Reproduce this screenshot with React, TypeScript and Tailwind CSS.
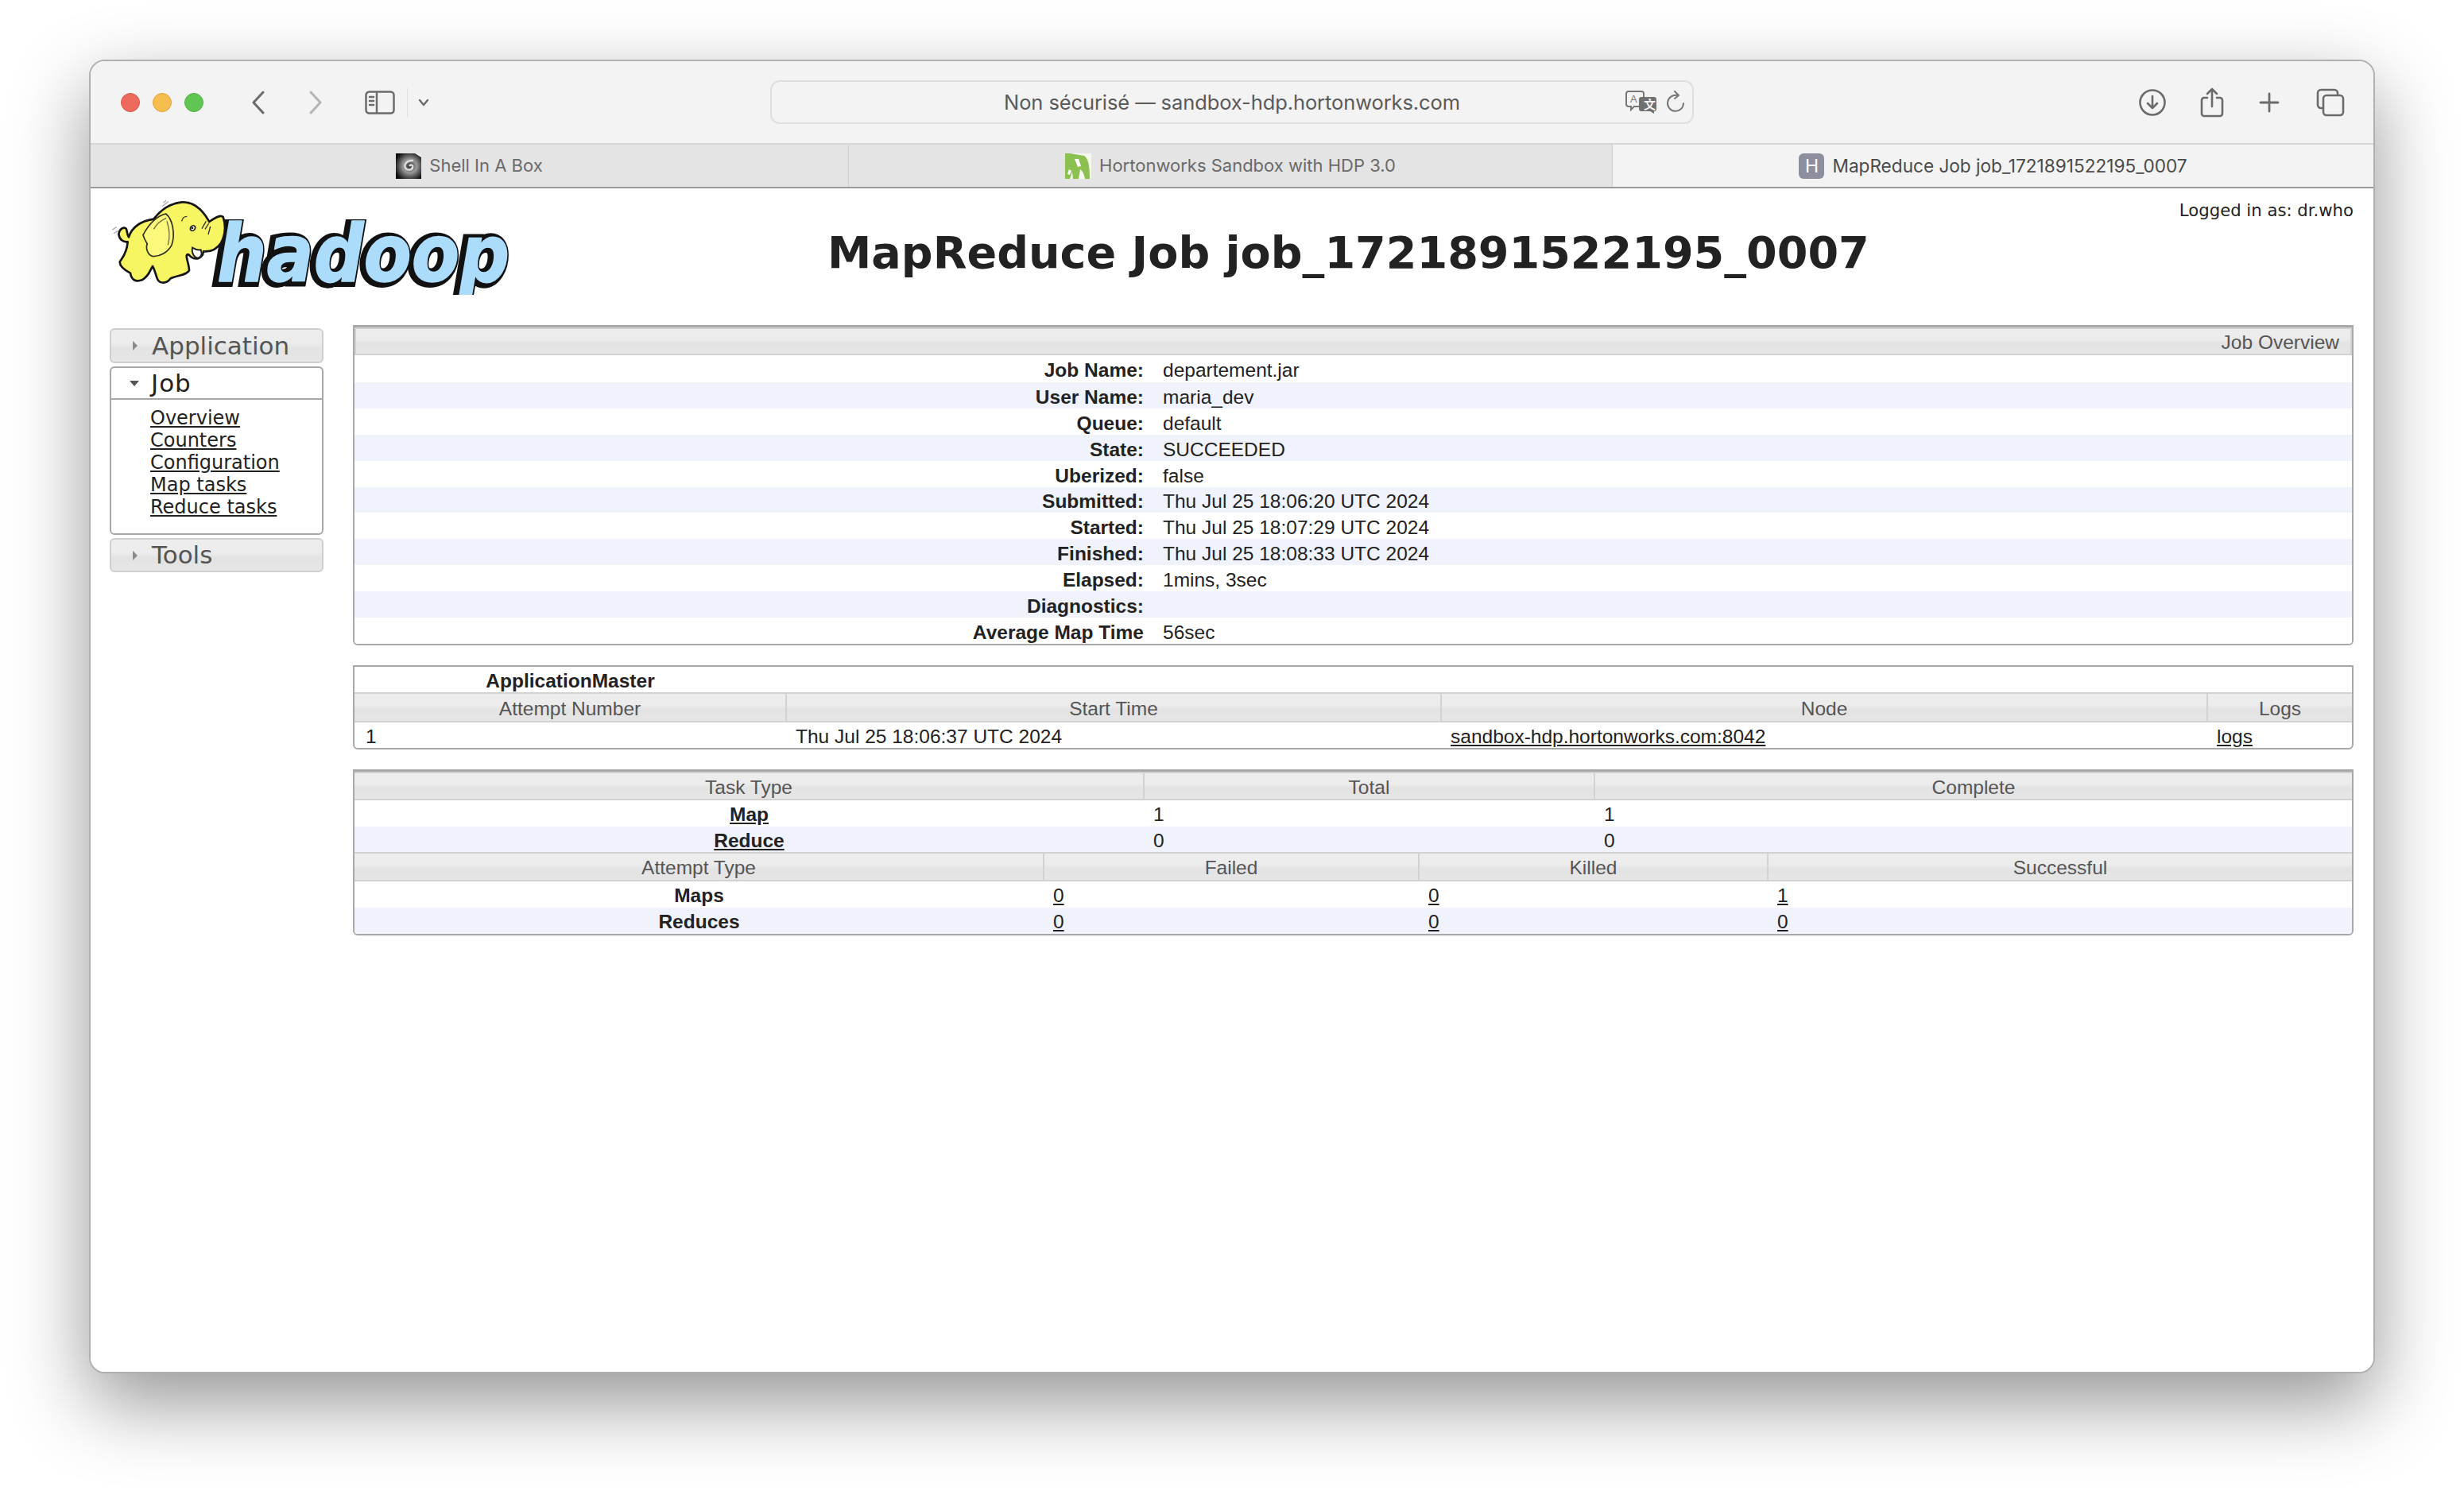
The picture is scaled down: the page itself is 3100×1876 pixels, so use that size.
const dejavu = "font-['DejaVu_Sans',sans-serif]";
const helv = "font-['Liberation_Sans',Arial,sans-serif]";
const headBg = "bg-[linear-gradient(#ededed_0%,#ececec_42%,#e3e3e3_58%,#e6e6e6_100%)]";

function HadoopLogo() {
  return (
    <svg width="530" height="135" viewBox="0 0 530 135" className="flex-none overflow-visible">
      <defs>
        <clipPath id="hadoopClip"><rect x="130" y="31" width="400" height="95" /></clipPath>
      </defs>
      <g clipPath="url(#hadoopClip)">
        <text x="143" y="108.5" fontFamily="'DejaVu Sans',sans-serif" fontWeight="bold" fontStyle="italic" fontSize="100" textLength="368" lengthAdjust="spacingAndGlyphs" fill="#111" stroke="#111" strokeWidth="12" strokeLinejoin="miter" transform="translate(-3 1)">hadoop</text>
        <text x="143" y="108.5" fontFamily="'DejaVu Sans',sans-serif" fontWeight="bold" fontStyle="italic" fontSize="100" textLength="368" lengthAdjust="spacingAndGlyphs" fill="#abdcfb" stroke="#abdcfb" strokeWidth="1.5" strokeLinejoin="round">hadoop</text>
      </g>
      <g transform="scale(0.33333)">
        <path d="M58 148C62 128 78 120 86 128C90 134 88 148 96 160C108 122 140 100 190 92C214 60 252 32 298 28C340 26 372 52 400 102C420 88 442 74 452 84C462 112 462 150 444 182C428 206 404 216 378 214C376 238 350 250 330 234C322 224 316 222 314 232C316 250 324 268 324 286C316 304 280 304 254 316C238 338 212 336 204 318C196 300 196 286 186 270C176 284 174 306 146 322C122 330 106 322 102 296C80 284 62 270 62 254C70 238 88 226 92 178C76 180 60 170 58 148Z" fill="#f8f562" stroke="#151515" strokeWidth="8" strokeLinejoin="round" />
        <path d="M150 152C168 118 196 82 236 72C262 92 272 150 258 190C244 216 214 236 184 232C164 224 160 196 166 186C160 176 154 166 150 152Z" fill="#fbf87c" stroke="#2b2b1a" strokeWidth="5" />
        <path d="M190 130C200 112 214 98 238 88M240 100C250 130 252 160 244 190" fill="none" stroke="#6e6d3a" strokeWidth="4" />
        <path d="M330 122C342 110 352 120 344 132C336 140 324 136 330 122Z" fill="#fff" stroke="#222" strokeWidth="5" />
        <circle cx="336" cy="126" r="4" fill="#222" />
        <path d="M296 100C298 88 306 82 316 82M372 128L388 100M384 130L398 108M396 150L404 120" fill="none" stroke="#333" strokeWidth="4" />
        <path d="M336 200C332 222 344 240 360 238C372 232 372 218 368 208C358 210 346 206 336 200Z" fill="#fff" stroke="#222" strokeWidth="6" />
        <path d="M34 132L50 122M40 146L56 136M222 44L246 26M226 30L238 22" fill="none" stroke="#aaa" strokeWidth="4" />
      </g>
    </svg>
  );
}

function Toolbar() {
  return (
    <div className="h-[103px] flex-none bg-[#f3f3f3] flex items-center">
      <div className="ml-[38px] flex gap-4">
        <div className="w-6 h-6 rounded-full bg-[#ee6a5f] border border-[#d9564b]" />
        <div className="w-6 h-6 rounded-full bg-[#f6bd4f] border border-[#dfa23a]" />
        <div className="w-6 h-6 rounded-full bg-[#61c554] border border-[#4fb043]" />
      </div>
      <svg width="18" height="30" viewBox="0 0 18 30" className="ml-[60px]" fill="none" stroke="#6b6b6b" strokeWidth="3" strokeLinecap="round" strokeLinejoin="round"><path d="M15 2 3 15l12 13" /></svg>
      <svg width="18" height="30" viewBox="0 0 18 30" className="ml-[54px]" fill="none" stroke="#b4b4b4" strokeWidth="3" strokeLinecap="round" strokeLinejoin="round"><path d="M3 2l12 13L3 28" /></svg>
      <svg width="38" height="30" viewBox="0 0 38 30" className="ml-[53px]" fill="none" stroke="#6b6b6b" strokeWidth="2.5"><rect x="1.5" y="1.5" width="35" height="27" rx="4" /><path d="M15 2v26" /><path d="M6 8h5M6 13h5M6 18h5" strokeLinecap="round" /></svg>
      <div className="ml-[15px] w-px h-9 bg-[#e0e0e0]" />
      <svg width="14" height="10" viewBox="0 0 14 10" className="ml-[13px]" fill="none" stroke="#6b6b6b" strokeWidth="2.4" strokeLinecap="round" strokeLinejoin="round"><path d="M2 2l5 6 5-6" /></svg>
      <div className="ml-[429px] w-[1162px] h-[55px] rounded-[12px] border-2 border-[#dedede] flex items-center relative">
        <span className="w-full text-center font-['Inter',sans-serif] text-[#5a5a5a] text-[25.5px] tracking-[-0.1px] pt-[1px]">Non sécurisé — sandbox-hdp.hortonworks.com</span>
        <svg width="40" height="30" viewBox="0 0 40 30" className="absolute left-[1074px] top-[11px]" fill="none">
          <path d="M4 1h16a3 3 0 0 1 3 3v13a3 3 0 0 1-3 3H11l-4 4v-4H4a3 3 0 0 1-3-3V4a3 3 0 0 1 3-3Z" stroke="#777" strokeWidth="2" fill="#f3f3f3" />
          <text x="6" y="15" fontSize="13" fill="#777" fontFamily="'Liberation Sans',sans-serif">A</text>
          <path d="M20 8h16a3 3 0 0 1 3 3v12a3 3 0 0 1-3 3v3l-5-3H20a3 3 0 0 1-3-3V11a3 3 0 0 1 3-3Z" fill="#707070" />
          <text x="23" y="23" fontSize="15" fontWeight="bold" fill="#f3f3f3" fontFamily="'Noto Sans CJK SC',sans-serif">文</text>
        </svg>
        <svg width="24" height="30" viewBox="0 0 24 30" className="absolute left-[1125px] top-[11px]" fill="none" stroke="#777" strokeWidth="2" strokeLinecap="round" strokeLinejoin="round"><path d="M14 6A10 10 0 1 0 22 16" /><path d="M11 1l5 5-5 4" /></svg>
      </div>
      <svg width="34" height="34" viewBox="0 0 34 34" className="ml-[560px]" fill="none" stroke="#6b6b6b" strokeWidth="2.6" strokeLinecap="round" strokeLinejoin="round"><circle cx="17" cy="17" r="15.5" /><path d="M17 9v15M11 18l6 6 6-6" /></svg>
      <svg width="30" height="38" viewBox="0 0 30 38" className="ml-[43px]" fill="none" stroke="#6b6b6b" strokeWidth="2.6" strokeLinecap="round" strokeLinejoin="round"><path d="M9 13H5a3 3 0 0 0-3 3v17a3 3 0 0 0 3 3h20a3 3 0 0 0 3-3V16a3 3 0 0 0-3-3h-4" /><path d="M15 24V2M9 8l6-6 6 6" /></svg>
      <svg width="26" height="26" viewBox="0 0 26 26" className="ml-[44px]" fill="none" stroke="#6b6b6b" strokeWidth="2.8" strokeLinecap="round"><path d="M13 2v22M2 13h22" /></svg>
      <svg width="36" height="36" viewBox="0 0 36 36" className="ml-[46px]" fill="none" stroke="#6b6b6b" strokeWidth="2.6" strokeLinejoin="round"><path d="M8 25H6a4 4 0 0 1-4-4V6a4 4 0 0 1 4-4h17a4 4 0 0 1 4 4v3" /><rect x="9" y="9" width="25" height="25" rx="4" /></svg>
    </div>
  );
}

function Swirl() {
  return (
    <svg width="32" height="32" viewBox="0 0 32 32" className="flex-none">
      <defs>
        <radialGradient id="sw" cx="55%" cy="50%" r="62%"><stop offset="0" stopColor="#2a2a2a" /><stop offset=".42" stopColor="#9a9a9a" /><stop offset="1" stopColor="#0c0c0c" /></radialGradient>
      </defs>
      <rect width="32" height="32" fill="url(#sw)" />
      <path d="M17 16c2-3 5-1 4 2s-7 4-9 0 2-10 10-9" fill="none" stroke="#dcdcdc" strokeWidth="2.5" />
      <path d="M24 0h8v5z" fill="#eee" />
    </svg>
  );
}

function Horton() {
  return (
    <svg width="33" height="32" viewBox="0 0 33 32" className="flex-none">
      <rect width="33" height="32" fill="#f4f7ee" />
      <path d="M0 0h6l18 3c5 3 7 12 7 29h-6c-1-6-3-10-6-12l-2 12h-7l-1-9-3 9H0Z" fill="#8cc152" />
      <path d="M12 7l4 10 4-1-3-9ZM5 20l3 2-2 5-3-1Z" fill="#fff" />
    </svg>
  );
}

function Tab({ icon, label, active, width }: { icon: React.ReactNode; label: string; active?: boolean; width: string }) {
  return (
    <div className={`${width} h-full flex items-center justify-center gap-[10px] border-r border-[#cfcfcf] ${active ? "bg-[#f3f3f3] text-[#4a4a4a] border-r-0 flex-1" : "bg-[#e4e4e4] text-[#6a6a6a]"}`}>
      {icon}
      <span className={`font-['Inter',sans-serif] ${active ? "text-[22.6px]" : "text-[22px]"}`}>{label}</span>
    </div>
  );
}

function SideHead({ label, tall }: { label: string; tall?: boolean }) {
  return (
    <div className={`${tall ? "h-[44px]" : "h-[43px]"} rounded-[6px] border-2 border-[#cfcfcf] ${headBg} flex items-center`}>
      <span className="ml-[27px] w-0 h-0 border-y-[6px] border-y-transparent border-l-[6px] border-l-[#8a8a8a]" />
      <span className={`ml-[18px] ${dejavu} text-[31px] leading-none text-[#555]`}>{label}</span>
    </div>
  );
}

function Sidebar() {
  return (
    <div className="ml-[24px] w-[269px] flex-none flex flex-col gap-[4px]">
      <SideHead label="Application" tall />
      <div className="h-[212px] rounded-[6px] border-2 border-[#a8a8a8] bg-white">
        <div className="h-[40px] border-b-2 border-[#a8a8a8] flex items-center">
          <span className="ml-[23px] w-0 h-0 border-x-[6px] border-x-transparent border-t-[7px] border-t-[#555]" />
          <span className={`ml-[15px] ${dejavu} text-[31px] leading-none text-[#222] tracking-[1px]`}>Job</span>
        </div>
        <ul className={`pt-[9px] pl-[49px] ${dejavu} text-[24px] leading-[28px] text-[#222]`}>
          {["Overview", "Counters", "Configuration", "Map tasks", "Reduce tasks"].map((l) => (
            <li key={l}><a className="underline">{l}</a></li>
          ))}
        </ul>
      </div>
      <SideHead label="Tools" />
    </div>
  );
}

function Box({ children, top }: { children: React.ReactNode; top?: boolean }) {
  return <div className={`border-x-2 border-b-2 border-[#a8a8a8] rounded-b-[6px] ${top ? "border-t-[3px]" : "border-t-2"} overflow-hidden ${helv} text-[24.5px] leading-none text-[#222]`}>{children}</div>;
}

const th = `${headBg} font-normal text-[#555] border-x-2 first:border-l-0 last:border-r-0 border-y-2 border-[#d2d2d2] p-0 pt-[4px] text-center`;

const overview: [string, string][] = [
  ["Job Name:", "departement.jar"],
  ["User Name:", "maria_dev"],
  ["Queue:", "default"],
  ["State:", "SUCCEEDED"],
  ["Uberized:", "false"],
  ["Submitted:", "Thu Jul 25 18:06:20 UTC 2024"],
  ["Started:", "Thu Jul 25 18:07:29 UTC 2024"],
  ["Finished:", "Thu Jul 25 18:08:33 UTC 2024"],
  ["Elapsed:", "1mins, 3sec"],
  ["Diagnostics:", ""],
  ["Average Map Time", "56sec"],
];

const rowHeight = (i: number) => (i === 0 ? "h-[34px]" : i === 5 ? "h-[32px]" : "h-[33px]");

function Overview() {
  return (
    <Box top>
      <div className={`h-[35px] ${headBg} border-2 border-[#d2d2d2] flex items-center justify-end pr-[14px] pt-[3px] text-[#555]`}>Job Overview</div>
      <table className="w-full table-fixed border-collapse">
        <colgroup><col className="w-[993px]" /><col /></colgroup>
        <tbody>
          {overview.map(([k, v], i) => (
            <tr key={k} className={`${rowHeight(i)} ${i % 2 ? "bg-[#f0f3fc]" : "bg-white"}`}>
              <th className="p-0 pt-[5px] text-right font-bold">{k}</th>
              <td className="p-0 pt-[5px] pl-[24px]">{v}</td>
            </tr>
          ))}
        </tbody>
      </table>
    </Box>
  );
}

function AppMaster() {
  return (
    <Box>
      <table className="w-full table-fixed border-collapse">
        <colgroup><col className="w-[543px]" /><col className="w-[824px]" /><col className="w-[964px]" /><col /></colgroup>
        <thead>
          <tr className="h-[33px]"><th className="p-0 pt-[4px] font-bold text-center">ApplicationMaster</th><th /><th /><th /></tr>
          <tr className="h-[36px]">{["Attempt Number", "Start Time", "Node", "Logs"].map((h) => <th key={h} className={th}>{h}</th>)}</tr>
        </thead>
        <tbody>
          <tr className="h-[33px]">
            <td className="p-0 pt-[4px] pl-[14px]">1</td>
            <td className="p-0 pt-[4px] pl-[12px]">Thu Jul 25 18:06:37 UTC 2024</td>
            <td className="p-0 pt-[4px] pl-[12px]"><a className="underline">sandbox-hdp.hortonworks.com:8042</a></td>
            <td className="p-0 pt-[4px] pl-[12px]"><a className="underline">logs</a></td>
          </tr>
        </tbody>
      </table>
    </Box>
  );
}

function Tasks() {
  return (
    <Box top>
      <table className="w-full table-fixed border-collapse">
        <colgroup><col className="w-[993px]" /><col className="w-[567px]" /><col /></colgroup>
        <thead><tr className="h-[34px]">{["Task Type", "Total", "Complete"].map((h) => <th key={h} className={th}>{h}</th>)}</tr></thead>
        <tbody>
          <tr className="h-[34px] bg-white"><th className="p-0 pt-[4px] font-bold text-center"><a className="underline">Map</a></th><td className="p-0 pt-[4px] pl-[12px]">1</td><td className="p-0 pt-[4px] pl-[12px]">1</td></tr>
          <tr className="h-[32px] bg-[#f0f3fc]"><th className="p-0 pt-[4px] font-bold text-center"><a className="underline">Reduce</a></th><td className="p-0 pt-[4px] pl-[12px]">0</td><td className="p-0 pt-[4px] pl-[12px]">0</td></tr>
        </tbody>
      </table>
      <table className="w-full table-fixed border-collapse">
        <colgroup><col className="w-[867px]" /><col className="w-[472px]" /><col className="w-[439px]" /><col /></colgroup>
        <thead><tr className="h-[35px]">{["Attempt Type", "Failed", "Killed", "Successful"].map((h) => <th key={h} className={th}>{h}</th>)}</tr></thead>
        <tbody>
          {[["Maps", "0", "0", "1"], ["Reduces", "0", "0", "0"]].map((r, i) => (
            <tr key={r[0]} className={`${i ? "h-[33px] bg-[#f0f3fc]" : "h-[34px] bg-white"}`}>
              <th className="p-0 pt-[4px] font-bold text-center">{r[0]}</th>
              {r.slice(1).map((v, j) => <td key={j} className="p-0 pt-[4px] pl-[12px]"><a className="underline">{v}</a></td>)}
            </tr>
          ))}
        </tbody>
      </table>
    </Box>
  );
}

export default function App() {
  return (
    <div className="w-[3100px] h-[1876px] bg-white overflow-hidden pt-[75px] pl-[112px]">
      <div className="w-[2876px] h-[1653px] rounded-[20px] border-2 border-[#b0b0b0] bg-white overflow-hidden flex flex-col shadow-[0_37px_97px_rgba(0,0,0,0.42)]">
        <Toolbar />
        <div className="h-[57px] flex-none flex border-y-2 border-t-[#d6d6d6] border-b-[#9a9a9a]">
          <Tab width="w-[954px]" label="Shell In A Box" icon={<Swirl />} />
          <Tab width="w-[961px]" label="Hortonworks Sandbox with HDP 3.0" icon={<Horton />} />
          <Tab width="w-[957px]" active label="MapReduce Job job_1721891522195_0007" icon={<div className="w-8 h-8 rounded-[6px] bg-[#8e8f9e] text-white font-['Inter',sans-serif] text-[23px] leading-8 text-center">H</div>} />
        </div>
        <div className="flex-1 flex flex-col bg-white">
          <div className="h-[172px] flex items-start">
            <div className="ml-[16px] mt-[8px]"><HadoopLogo /></div>
            <h1 className={`ml-[381px] mt-[46px] ${dejavu} font-bold text-[55.6px] leading-[70px] text-[#222] whitespace-nowrap`}>MapReduce Job job_1721891522195_0007</h1>
            <span className={`ml-auto mr-[25px] mt-[14px] ${dejavu} text-[21.2px] leading-[28px] text-[#222] whitespace-nowrap`}>Logged in as: dr.who</span>
          </div>
          <div className="flex items-start">
            <div className="pt-[4px]"><Sidebar /></div>
            <div className="ml-[37px] w-[2517px] flex flex-col gap-[25px]">
              <Overview />
              <AppMaster />
              <Tasks />
            </div>
          </div>
        </div>
      </div>
    </div>
  );
}
